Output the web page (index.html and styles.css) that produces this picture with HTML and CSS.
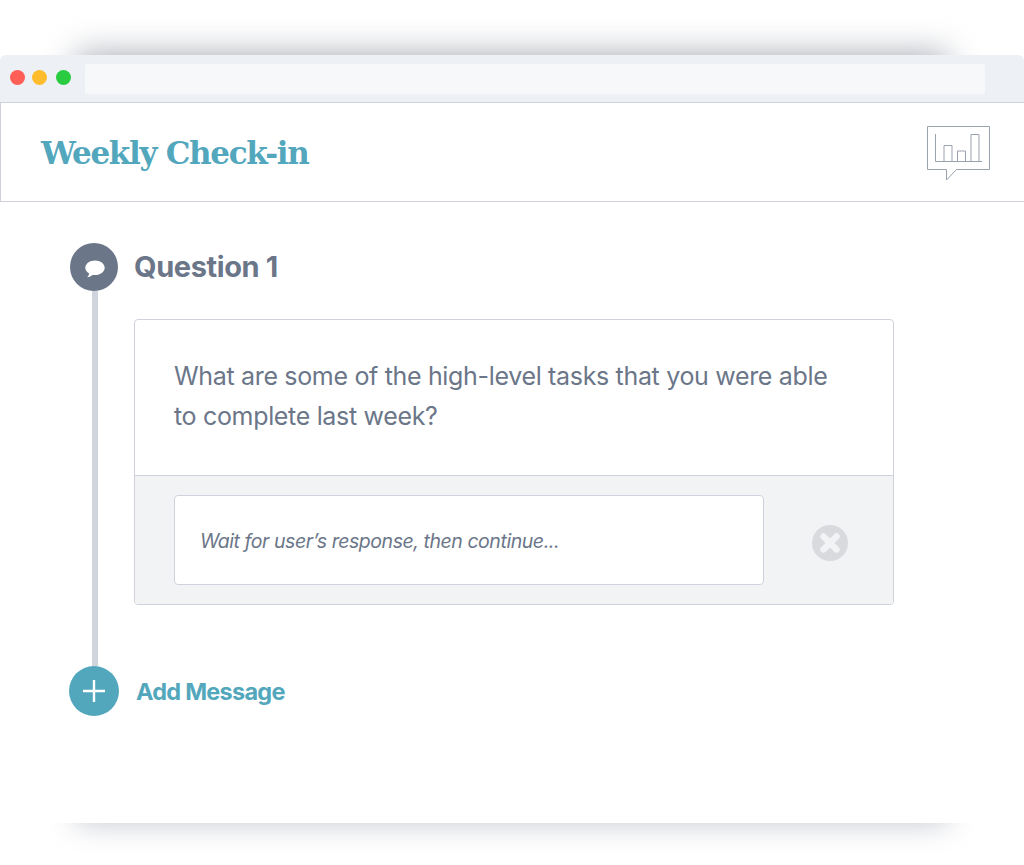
FILE: index.html
```html
<!DOCTYPE html>
<html lang="en">
<head>
  <meta charset="UTF-8">
  <meta name="viewport" content="width=device-width, initial-scale=1.0">
  <title>Weekly Check-in</title>
  <link rel="stylesheet" href="styles.css">
</head>
<body>
  <div class="window">
    <div class="window-inner">
      <!-- browser chrome -->
      <div class="chrome">
        <div class="dots">
          <span class="dot dot-red"></span>
          <span class="dot dot-yellow"></span>
          <span class="dot dot-green"></span>
        </div>
        <div class="address"></div>
      </div>

      <header class="app-header">
        <h1>Weekly Check-in</h1>
        <svg class="report-icon" width="64" height="55" viewBox="0 0 64 55" fill="none" stroke="#9ba2af" stroke-width="1">
          <path d="M.5.5h62v43H29.5L19.5 54v-10.500H.5z"/>
          <path d="M8.500 8v27.500H55"/>
          <path d="M17 35.500V19.500h8v16M30.500 35.500V25h8v10.500M44 35.500V8.500h8v27"/>
        </svg>
      </header>

      <!-- message thread -->
      <main class="thread">
        <div class="bubble-badge">
          <svg width="22" height="20" viewBox="0 0 22 20">
            <path fill="#fff" d="M11 1.500c5.400 0 9.700 3.200 9.700 7.300s-4.300 7.300-9.700 7.300c-.9 0-1.700-.1-2.500-.2-1.400 1.300-3 2-5.200 2.300 1-1.100 1.700-2.300 1.800-3.700C2.800 13.200 1.300 11.100 1.300 8.800c0-4.100 4.300-7.300 9.700-7.300z"/>
          </svg>
        </div>
        <h2 class="step-title">Question 1</h2>

        <div class="rail"></div>
        <section class="card">
          <p class="question">What are some of the high-level tasks that you were able to complete last week?</p>
          <div class="card-foot">
            <div class="response">Wait for user’s response, then continue...</div>
            <svg class="remove" width="36" height="36" viewBox="0 0 36 36">
              <circle cx="18" cy="18" r="18" fill="#d8dade"/>
              <path d="M11.500 11.500l13 13M24.500 11.500l-13 13" stroke="#f2f3f5" stroke-width="6.500" stroke-linecap="round"/>
            </svg>
          </div>
        </section>

        <div class="add-badge">
          <svg width="22" height="22" viewBox="0 0 22 22">
            <path d="M11 0v22M0 11h22" stroke="#fff" stroke-width="2.400"/>
          </svg>
        </div>
        <div class="add-label">Add Message</div>
      </main>
    </div>
  </div>
</body>
</html>
```

FILE: styles.css
```css
:root {
  --teal: #53a7bd;
  --slate: #6b7689;
  --border: #cfd2da;
  --panel: #f2f3f5;
}
*, *::before, *::after { box-sizing: border-box; }
html, body { height: 100%; }
body {
  margin: 0;
  padding-top: 55px;
  background: #fff;
  font-family: "Inter", sans-serif;
  color: var(--slate);
  overflow: hidden;
}
.window {
  position: relative;
  isolation: isolate;
  height: 768px;
}
/* soft shadows peeking out above and below the window */
.window::before,
.window::after {
  content: "";
  position: absolute;
  left: 76px;
  right: 76px;
  z-index: -1;
  height: 70px;
}
.window::before {
  top: 0;
  background: #9fa4ad;
  filter: blur(17px);
}
.window::after {
  bottom: 0;
  background: #c1c5cd;
  filter: blur(15px);
}
.window-inner {
  height: 100%;
  background: #fff;
  border-radius: 6px 6px 0 0;
}

.chrome {
  display: flex;
  align-items: center;
  height: 48px;
  padding: 0 39px 0 10px;
  background: #edf0f5;
  border-bottom: 1px solid var(--border);
  border-radius: 6px 6px 0 0;
}
.dots { display: flex; gap: 7px; width: 75px; margin-top: -2px; }
.dot { width: 15px; height: 15px; border-radius: 50%; }
.dot-red { background: #ff5f57; }
.dot-yellow { background: #ffbd2e; }
.dot-green { background: #29cc41; margin-left: 2px; }
.address {
  flex: 1;
  height: 30px;
  background: #f6f8fa;
  border-radius: 2px;
}

.app-header {
  display: flex;
  justify-content: space-between;
  align-items: center;
  height: 99px;
  padding: 2px 33px 0 40px;
  border-left: 1px solid var(--border);
  border-bottom: 1px solid var(--border);
}
.app-header h1 {
  margin: 0;
  font-family: "DejaVu Serif", serif;
  font-size: 31px;
  font-weight: 700;
  letter-spacing: -1.3px;
  color: var(--teal);
}
.report-icon { display: block; }

.thread {
  display: grid;
  grid-template-columns: 50px 760px;
  column-gap: 15px;
  padding: 41px 0 0 69px;
}
.bubble-badge {
  display: flex;
  align-items: center;
  justify-content: center;
  justify-self: center;
  width: 48px;
  height: 48px;
  padding: 3px 0 0 2px;
  border-radius: 50%;
  background: var(--slate);
}
.step-title {
  margin: 0 0 2px;
  align-self: center;
  font-size: 29px;
  font-weight: 700;
  letter-spacing: -0.4px;
}
.rail {
  justify-self: center;
  width: 6px;
  margin-left: 2px;
  background: #d0d4dc;
}
.card {
  margin: 28px 0 61px;
  height: 286px;
  border: 1px solid var(--border);
  border-radius: 4px;
  overflow: hidden;
}
.question {
  margin: 0;
  height: 155px;
  padding: 36px 39px 0;
  font-size: 25px;
  letter-spacing: -0.33px;
  line-height: 40px;
}
.card-foot {
  display: flex;
  align-items: center;
  height: 129px;
  padding: 0 45.500px 0 39px;
  background: var(--panel);
  border-top: 1px solid var(--border);
}
.response {
  width: 590px;
  height: 90px;
  margin-top: -1px;
  padding-left: 25px;
  background: #fff;
  border: 1px solid var(--border);
  border-radius: 4px;
  font-size: 19.500px;
  font-style: italic;
  letter-spacing: -0.45px;
  line-height: 91px;
}
.remove { display: block; margin: 6px 0 0 auto; }
.add-badge {
  display: flex;
  align-items: center;
  justify-content: center;
  width: 50px;
  height: 50px;
  border-radius: 50%;
  background: var(--teal);
}
.add-label {
  align-self: center;
  padding-left: 2px;
  font-size: 23.500px;
  font-weight: 700;
  letter-spacing: -0.75px;
  color: var(--teal);
}
```
